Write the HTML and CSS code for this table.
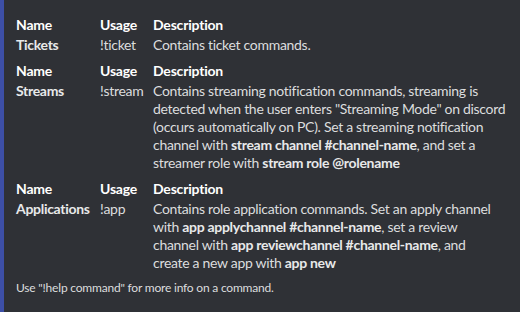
FILE: index.html
```html
<!DOCTYPE html>
<html>
<head>
<meta charset="utf-8">
<link rel="stylesheet" href="styles.css">
</head>
<body>
<div class="embed">
  <div class="fields">
    <div class="field"><div class="fname">Name</div><div class="fvalue strongval">Tickets</div></div>
    <div class="field"><div class="fname">Usage</div><div class="fvalue">!ticket</div></div>
    <div class="field"><div class="fname">Description</div><div class="fvalue">Contains ticket commands.</div></div>

    <div class="field"><div class="fname">Name</div><div class="fvalue strongval">Streams</div></div>
    <div class="field"><div class="fname">Usage</div><div class="fvalue">!stream</div></div>
    <div class="field"><div class="fname">Description</div><div class="fvalue">Contains streaming notification commands, streaming is<br>detected when the user enters "Streaming Mode" on discord<br>(occurs automatically on PC). Set a streaming notification<br>channel with <strong>stream channel #channel-name</strong>, and set a<br>streamer role with <strong>stream role @rolename</strong></div></div>

    <div class="field"><div class="fname">Name</div><div class="fvalue strongval">Applications</div></div>
    <div class="field"><div class="fname">Usage</div><div class="fvalue">!app</div></div>
    <div class="field"><div class="fname">Description</div><div class="fvalue">Contains role application commands. Set an apply channel<br>with <strong>app applychannel #channel-name</strong>, set a review<br>channel with <strong>app reviewchannel #channel-name</strong>, and<br>create a new app with <strong>app new</strong></div></div>
  </div>
  <div class="footer">Use "!help command" for more info on a command.</div>
</div>
</body>
</html>
```
FILE: styles.css
```css
html, body {
  margin: 0;
  padding: 0;
  background: #2f3136;
}
body {
  font-family: Lato, "Noto Sans", sans-serif;
}
.embed {
  box-sizing: border-box;
  width: 520px;
  height: 312px;
  background: #2f3136;
  border-left: 4px solid #3d4fa6;
  padding: 8px 12px 16px 12px;
}
.fields {
  display: grid;
  grid-template-columns: 84px 53px 1fr;
  row-gap: 8px;
  margin-top: 8px;
}
.fname {
  color: #ffffff;
  font-size: 14px;
  font-weight: 700;
  line-height: 18px;
  margin-bottom: 2px;
  letter-spacing: -0.2px;
}
.fvalue {
  color: #dcddde;
  font-size: 14px;
  line-height: 18px;
  letter-spacing: -0.3px;
  white-space: nowrap;
}
.fvalue strong,
.strongval {
  font-weight: 700;
  color: #e8e9ea;
}
.footer {
  margin-top: 8px;
  color: #dcddde;
  font-size: 12px;
  line-height: 16px;
  letter-spacing: -0.2px;
}
```
